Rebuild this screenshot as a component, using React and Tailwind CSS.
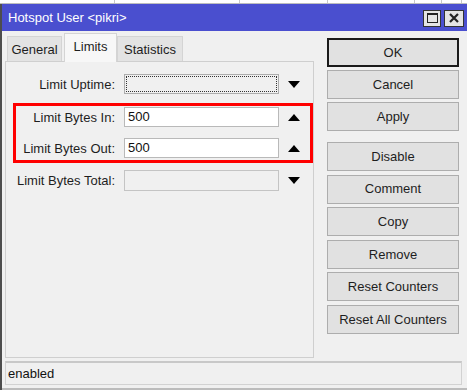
import React from 'react';

function Arrow({ up }) {
  return (
    <svg width="12" height="7" viewBox="0 0 12 7" className="block">
      {up ? <polygon points="0,7 12,7 6,0" fill="#000" /> : <polygon points="0,0 12,0 6,7" fill="#000" />}
    </svg>
  );
}

function Row({ label, labelW, value, kind, up, h = 'h-[20px]' }) {
  let box = 'border border-[#adadad] bg-[#f0f0f0]';
  if (kind === 'white') box = 'border border-[#b9b9b9] bg-white';
  if (kind === 'off') box = 'border border-[#c4c4c4] bg-[#f0f0f0]';
  return (
    <div className="flex items-center">
      <div className="text-right text-[13px] text-[#1e1e1e] leading-none" style={{ width: labelW }}>{label}</div>
      <div className={`ml-[9px] w-[155px] ${h} ${box} flex items-center`}>
        {kind === 'focus' && <div className="m-[1px] w-full h-[16px] border border-dotted border-[#333]" />}
        {value && <span className="pl-[3px] text-[13px] text-[#111]">{value}</span>}
      </div>
      <div className="ml-[9px]"><Arrow up={up} /></div>
    </div>
  );
}

function Btn({ children, primary }) {
  return (
    <div className={`h-[29px] flex items-center justify-center text-[13px] text-[#1e1e1e] bg-[#e1e1e1] ${primary ? 'border-2 border-[#1a1a1a]' : 'border border-[#adadad]'}`}>
      {children}
    </div>
  );
}

export default function App() {
  return (
    <div className="w-[467px] h-[390px] bg-white overflow-hidden" style={{ fontFamily: '"Liberation Sans", Arial, sans-serif' }}>
      <div className="h-[4px] flex border-b border-[#bdbdbd]">
        <div className="w-[115px] border-r border-[#c8c8c8]" />
        <div className="w-[125px] border-r border-[#c8c8c8]" />
        <div className="w-[88px] border-r border-[#c8c8c8]" />
        <div className="w-[87px] border-r border-[#c8c8c8]" />
        <div className="w-[27px] border-r border-[#c8c8c8]" />
        <div className="w-[20px] border-r border-[#c8c8c8]" />
      </div>
      <div className="h-[386px] flex flex-col border-l-2 border-[#4d4d4d] bg-[#f0f0f0]">
        <div className="h-[27px] bg-[#4a4fcf] flex items-center justify-between pl-[6px] pr-[3px]">
          <span className="text-white text-[13px]">Hotspot User &lt;pikri&gt;</span>
          <div className="flex gap-[3px] mt-[1px]">
            <div className="w-[18px] h-[17px] bg-[#e4e4e4] border border-[#333] flex items-center justify-center">
              <div className="w-[11px] h-[10px] border border-[#222] border-t-2" />
            </div>
            <div className="w-[20px] h-[17px] bg-[#e4e4e4] border border-[#333] flex items-center justify-center">
              <svg width="10" height="10" viewBox="0 0 10 10">
                <path d="M1 1 L9 9 M9 1 L1 9" stroke="#222" strokeWidth="2.2" />
              </svg>
            </div>
          </div>
        </div>
        <div className="flex">
          <div className="ml-[3px] w-[309px] pt-[2px]">
            <div className="flex items-end h-[28px] pl-[2px] relative z-10">
              <div className="h-[25px] w-[55px] bg-[#e3e3e3] border border-[#d4d4d4] border-b-0 flex items-center justify-center text-[13px] text-[#1e1e1e] pt-[2px]">General</div>
              <div className="ml-[2px] h-[29px] -mb-[1px] w-[53px] bg-[#f7f7f7] border border-[#d4d4d4] border-b-0 flex items-center justify-center text-[13px] text-[#1e1e1e] pb-[3px]">Limits</div>
              <div className="h-[25px] w-[66px] bg-[#e3e3e3] border border-[#d4d4d4] border-b-0 flex items-center justify-center text-[13px] text-[#1e1e1e] pt-[1px]">Statistics</div>
            </div>
            <div className="h-[297px] border border-[#cfcfcf] bg-[#f0f0f0] pt-[12px]">
              <Row label="Limit Uptime:" labelW={109} kind="focus" />
              <div className="mt-[9px] ml-[7px] w-[300px] border-[3px] border-[#ff0000] pt-[1px] pb-[2px]">
                <Row label="Limit Bytes In:" labelW={99} kind="white" value="500" up />
                <div className="mt-[11px]">
                  <Row label="Limit Bytes Out:" labelW={99} kind="white" value="500" up />
                </div>
              </div>
              <div className="mt-[7px]">
                <Row label="Limit Bytes Total:" labelW={109} kind="off" h="h-[21px]" />
              </div>
            </div>
          </div>
          <div className="ml-[13px] w-[132px] pt-[7px]">
            <div className="flex flex-col gap-[3px]">
              <Btn primary>OK</Btn>
              <Btn>Cancel</Btn>
              <Btn>Apply</Btn>
            </div>
            <div className="mt-[11px] flex flex-col gap-[3.6px]">
              <Btn>Disable</Btn>
              <Btn>Comment</Btn>
              <Btn>Copy</Btn>
              <Btn>Remove</Btn>
              <Btn>Reset Counters</Btn>
              <Btn>Reset All Counters</Btn>
            </div>
          </div>
        </div>
        <div className="mt-[3px] ml-[3px] w-[457px] h-[24px] border border-[#d2d2d2] border-t-2 border-t-[#c8c8c8] flex items-center pl-[2px] text-[13px] text-[#111]">enabled</div>
        <div className="flex-1" />
        <div className="h-[2px] bg-[#bcbcbc]" />
      </div>
    </div>
  );
}
